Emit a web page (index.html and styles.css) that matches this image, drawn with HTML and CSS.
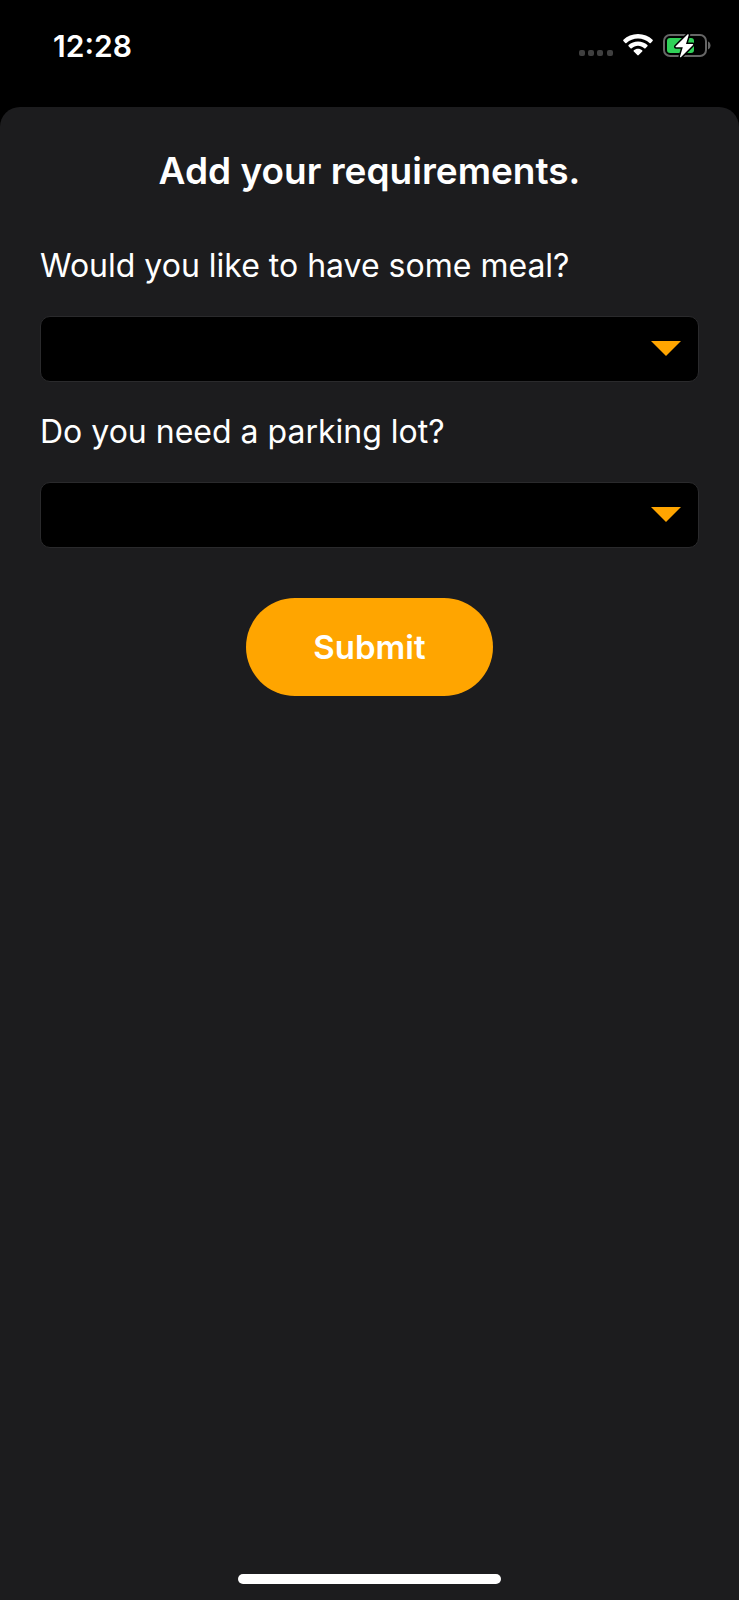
FILE: index.html
```html
<!DOCTYPE html>
<html lang="en">
<head>
    <meta charset="UTF-8" />
    <meta name="viewport" content="width=device-width, initial-scale=1" />
    <title>Add your requirements</title>
    <link rel="stylesheet" href="styles.css">
</head>
<body>
    <header class="status-bar">
        <span class="time">12:28</span>
        <div class="status-icons">
            <svg class="dots" width="34" height="22" viewBox="0 0 34 22" aria-hidden="true">
                <rect x="0" y="16" width="6" height="6" rx="2" />
                <rect x="9" y="16" width="6" height="6" rx="2" />
                <rect x="18" y="16" width="6" height="6" rx="2" />
                <rect x="28" y="16" width="6" height="6" rx="2" />
            </svg>
            <svg class="wifi" width="30" height="22" viewBox="0 0 30 22" aria-hidden="true">
                <path d="M15 0C9.300 0 4.200 2.200.4 5.800c-.4.400-.4.900 0 1.300l1.800 1.800c.4.400.9.400 1.300 0C6.600 6.100 10.600 4.400 15 4.400s8.400 1.700 11.500 4.500c.4.400.9.400 1.300 0l1.800-1.800c.4-.4.400-.9 0-1.300C25.800 2.200 20.700 0 15 0z" />
                <path d="M15 7.400c-3.600 0-6.900 1.400-9.400 3.600-.4.400-.4.900 0 1.300l1.900 1.900c.4.400.9.400 1.300 0 1.700-1.500 3.900-2.400 6.200-2.400s4.500.9 6.200 2.400c.4.400.9.400 1.300 0l1.900-1.900c.4-.4.400-.9 0-1.300-2.500-2.200-5.800-3.600-9.400-3.600z" />
                <path d="M15 14.800c-1.600 0-3.100.6-4.200 1.500-.4.400-.4.900 0 1.300l3.500 3.500c.4.400 1 .4 1.400 0l3.500-3.500c.4-.4.400-.9 0-1.300-1.100-.9-2.600-1.500-4.200-1.500z" />
            </svg>
            <svg class="battery" width="48" height="24" viewBox="0 0 48 24" aria-hidden="true">
                <rect class="battery-case" x="1" y="1" width="42" height="21" rx="6" />
                <path class="battery-tip" d="M45 7.500c1.600.6 2.500 2.200 2.500 4s-.9 3.400-2.500 4z" />
                <rect class="battery-level" x="4" y="4" width="27" height="15" rx="3" />
                <path class="battery-bolt" d="M24.500.5L12.700 12.200c-.4.500-.2 1 .4 1h6.700l-2.800 9.300c-.2.800.6 1.100 1.100.6L30 11c.4-.5.200-1-.4-1H23L25.700 1.100c.2-.8-.6-1.200-1.200-.6z" />
            </svg>
        </div>
    </header>

    <main class="sheet">
        <h1>Add your requirements.</h1>
        <form class="form">
            <label for="meal">Would you like to have some meal?</label>
            <div class="select-box">
                <select id="meal" name="meal">
                    <option value=""></option>
                    <option value="yes">Yes</option>
                    <option value="no">No</option>
                </select>
            </div>
            <label for="parking">Do you need a parking lot?</label>
            <div class="select-box">
                <select id="parking" name="parking">
                    <option value=""></option>
                    <option value="yes">Yes</option>
                    <option value="no">No</option>
                </select>
            </div>
            <button type="submit">Submit</button>
        </form>
        <div class="home-indicator"></div>
    </main>
</body>
</html>
```
FILE: styles.css
```css
* {
    box-sizing: border-box;
}
body {
    display: flex;
    flex-direction: column;
    min-height: 100vh;
    margin: 0;
    background: #000;
    color: #fff;
    font-family: Inter, "Liberation Sans", sans-serif;
}
.status-bar {
    display: flex;
    justify-content: space-between;
    align-items: center;
    height: 107px;
    padding: 0 28px 16px 53px;
}
.time {
    font-size: 30px;
    font-weight: 600;
}
.status-icons {
    display: flex;
    align-items: flex-start;
    gap: 10px;
}
.dots {
    fill: #3f3f3f;
}
.wifi {
    fill: #fff;
}
.battery-case {
    fill: none;
    stroke: #666;
    stroke-width: 2;
}
.battery-tip {
    fill: #666;
}
.battery-level {
    fill: #30d158;
}
.battery-bolt {
    fill: #fff;
    stroke: #000;
    stroke-width: 3;
    paint-order: stroke;
}
.sheet {
    display: flex;
    flex-direction: column;
    flex: 1;
    padding: 40px 40px 16px;
    background: #1c1c1e;
    border-radius: 20px 20px 0 0;
}
h1 {
    margin: 0 0 51px;
    font-size: 37px;
    font-weight: 600;
    line-height: 48px;
    text-align: center;
}
.form {
    display: flex;
    flex-direction: column;
    gap: 30px;
}
label {
    font-size: 32px;
    line-height: 40px;
}
.select-box {
    position: relative;
}
/* dropdown arrow */
.select-box::after {
    content: "";
    position: absolute;
    top: 25px;
    right: 18px;
    border: 15px solid transparent;
    border-top: 15px solid orange;
    border-bottom: 0;
    pointer-events: none;
}
select {
    display: block;
    width: 100%;
    height: 66px;
    padding: 0 60px 0 16px;
    appearance: none;
    background: #000;
    border: 1px solid #2a2a2c;
    border-radius: 10px;
    color: #fff;
    font: inherit;
    font-size: 32px;
}
button {
    align-self: center;
    margin-top: 20px;
    padding: 29px 67px;
    background: orange;
    border: 0;
    border-radius: 50px;
    color: #fff;
    font: inherit;
    font-size: 33px;
    font-weight: 600;
    line-height: 40px;
}
.home-indicator {
    align-self: center;
    width: 40%;
    height: 10px;
    margin-top: auto;
    background: #fff;
    border-radius: 5px;
}
```
